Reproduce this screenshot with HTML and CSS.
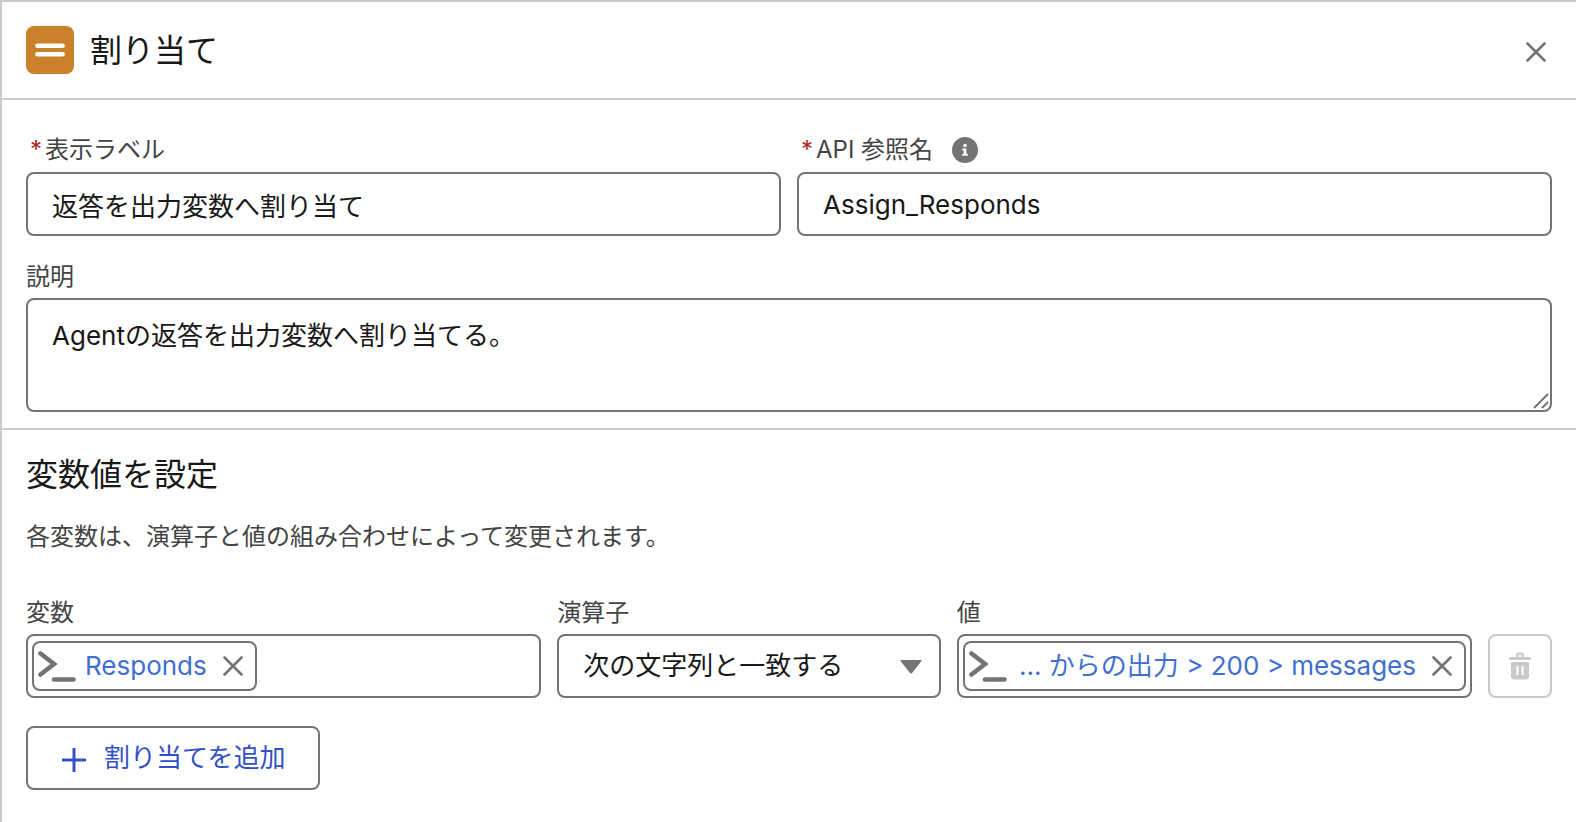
FILE: index.html
```html
<!DOCTYPE html>
<html lang="ja">
<head>
<meta charset="utf-8">
<title>割り当て</title>
<link rel="stylesheet" href="styles.css">
</head>
<body>
<main class="panel">
  <header class="panel-header">
    <span class="element-icon">
      <svg viewBox="0 0 48 48" aria-hidden="true"><path d="M11.400 19.800H36.600M11.400 28.200H36.600"/></svg>
    </span>
    <h1 class="title">割り当て</h1>
    <button class="icon-button close" type="button" aria-label="閉じる">
      <svg class="cross" viewBox="0 0 20 20" aria-hidden="true"><path d="M1.500 1.500l17 17M18.500 1.500l-17 17"/></svg>
    </button>
  </header>

  <section class="details">
    <div class="name-row">
      <div class="field">
        <div class="label-row required">
          <span class="asterisk" aria-hidden="true">*</span>
          <label for="label">表示ラベル</label>
        </div>
        <input class="control" id="label" type="text" value="返答を出力変数へ割り当て" required>
      </div>
      <div class="field">
        <div class="label-row required">
          <span class="asterisk" aria-hidden="true">*</span>
          <label for="api">API 参照名</label>
          <button class="icon-button info" type="button" aria-label="ヘルプ">
            <svg viewBox="0 0 26 26" aria-hidden="true"><circle cx="13" cy="13" r="13" fill="#747474"/><circle cx="13" cy="8.500" r="1.800" fill="#fff"/><path d="M10.300 11.500h4.100v5.300h1.400v1.900h-5.500v-1.900h1.400v-3.400h-1.400z" fill="#fff"/></svg>
          </button>
        </div>
        <input class="control" id="api" type="text" value="Assign_Responds" required>
      </div>
    </div>
    <div class="field">
      <div class="label-row"><label for="description">説明</label></div>
      <div class="textarea-wrap">
        <textarea class="control" id="description" rows="2">Agentの返答を出力変数へ割り当てる。</textarea>
        <svg class="grip" viewBox="0 0 16 16" aria-hidden="true"><path d="M1 15L15 1M9 15l6-6"/></svg>
      </div>
    </div>
  </section>

  <section class="assignments">
    <h2 class="title">変数値を設定</h2>
    <p class="hint">各変数は、演算子と値の組み合わせによって変更されます。</p>
    <div class="assignment-row">
      <div class="field">
        <div class="label-row"><span id="variable-label">変数</span></div>
        <div class="control pill-box" role="group" aria-labelledby="variable-label">
          <span class="pill">
            <svg class="prompt" viewBox="0 0 38 32" aria-hidden="true"><path d="M2.500 3.500L16 14 2.500 24.500"/><path d="M16 29.500h19.500"/></svg>
            <a class="pill-text" href="#">Responds</a>
            <button class="icon-button" type="button" aria-label="Responds を削除"><svg class="cross" viewBox="0 0 20 20" aria-hidden="true"><path d="M1.500 1.500l17 17M18.500 1.500l-17 17"/></svg></button>
          </span>
        </div>
      </div>
      <div class="field">
        <div class="label-row"><label for="operator">演算子</label></div>
        <div class="select-wrap">
          <select class="control" id="operator"><option>次の文字列と一致する</option></select>
          <svg class="caret" viewBox="0 0 22 14" aria-hidden="true"><path d="M1 0h20q1 0 .5 1L12 13q-1 1-2 0L.500 1Q0 0 1 0z"/></svg>
        </div>
      </div>
      <div class="field">
        <div class="label-row"><span id="value-label">値</span></div>
        <div class="control pill-box" role="group" aria-labelledby="value-label">
          <span class="pill wide">
            <svg class="prompt" viewBox="0 0 38 32" aria-hidden="true"><path d="M2.500 3.500L16 14 2.500 24.500"/><path d="M16 29.500h19.500"/></svg>
            <a class="pill-text" href="#">... からの出力 &gt; 200 &gt; messages</a>
            <button class="icon-button" type="button" aria-label="値を削除"><svg class="cross" viewBox="0 0 20 20" aria-hidden="true"><path d="M1.500 1.500l17 17M18.500 1.500l-17 17"/></svg></button>
          </span>
        </div>
      </div>
      <button class="delete" type="button" aria-label="行を削除" disabled>
        <svg viewBox="0 0 22 28" aria-hidden="true"><path d="M1 5h6V3q0-2.500 2.500-2.500h3Q15 .500 15 3v2h6q1 0 1 1v1q0 1-1 1H1Q0 8 0 7V6q0-1 1-1zm8.500 0h3V3h-3z" fill-rule="evenodd"/><path d="M3 10h16q1 0 1 1v13.500q0 3-3 3H5q-3 0-3-3V11q0-1 1-1zm4.500 4v9h2v-9zm5 0v9h2v-9z" fill-rule="evenodd"/></svg>
      </button>
    </div>
    <button class="add" type="button">
      <svg viewBox="0 0 24 24" aria-hidden="true"><path d="M12 0v24M0 12h24"/></svg>
      <span>割り当てを追加</span>
    </button>
  </section>
</main>
</body>
</html>
```
FILE: styles.css
```css
* {
  box-sizing: border-box;
}

body {
  margin: 0;
  background: #fff;
  color: #181818;
  font: 26px/36px Inter, "Noto Sans CJK JP", sans-serif;
}

input,
textarea,
select,
button {
  font: inherit;
  color: inherit;
}

svg {
  display: block;
  flex: none;
}

.panel {
  min-height: 100vh;
  border-top: 2px solid #c9c9c9;
  border-left: 2px solid #c9c9c9;
}

.panel-header {
  display: flex;
  align-items: center;
  gap: 16px;
  padding: 24px;
  border-bottom: 2px solid #c9c9c9;
}

.element-icon {
  width: 48px;
  height: 48px;
  border-radius: 8px;
  background: #ca8129;
}

.element-icon path {
  stroke: #fff;
  stroke-width: 4.500;
  stroke-linecap: round;
}

.title {
  margin: 0;
  padding-top: 2px;
  font-size: 32px;
  line-height: 46px;
  font-weight: 400;
}

.icon-button {
  display: flex;
  padding: 0;
  border: 0;
  background: none;
}

.close {
  margin: 4px 6px 0 auto;
}

.cross {
  width: 20px;
  height: 20px;
  fill: none;
  stroke: #747474;
  stroke-width: 2.600;
  stroke-linecap: round;
}

.details {
  display: grid;
  gap: 22px;
  padding: 32px 24px 16px;
  border-bottom: 2px solid #c9c9c9;
}

.name-row {
  display: grid;
  grid-template-columns: 1fr 1fr;
  gap: 16px;
}

.field {
  min-width: 0;
}

.label-row {
  display: flex;
  align-items: center;
  height: 40px;
  padding-bottom: 2px;
  color: #444;
  font-size: 24px;
}

.required {
  gap: 3px;
  padding-bottom: 4px;
  padding-left: 4px;
}

.asterisk {
  color: #b0281a;
}

.info {
  margin-left: 16px;
}

.info svg {
  width: 26px;
  height: 26px;
}

.control {
  display: block;
  width: 100%;
  height: 64px;
  padding: 0 24px;
  border: 2px solid #747474;
  border-radius: 8px;
  background: #fff;
}

.textarea-wrap,
.select-wrap {
  position: relative;
}

textarea.control {
  height: 114px;
  padding: 18px 24px;
  resize: vertical;
}

textarea::-webkit-resizer {
  display: none;
}

.grip {
  position: absolute;
  right: 3px;
  bottom: 3px;
  width: 16px;
  height: 16px;
  fill: none;
  stroke: #747474;
  stroke-width: 2;
  pointer-events: none;
}

select.control {
  appearance: none;
}

.caret {
  position: absolute;
  top: 26px;
  right: 19px;
  width: 22px;
  height: 14px;
  fill: #747474;
  pointer-events: none;
}

.assignments {
  padding: 20px 24px;
}

.hint {
  margin: 21px 0 39px;
  color: #444;
  font-size: 24px;
}

.assignment-row {
  display: grid;
  grid-template-columns: 47fr 35fr 47fr 64px;
  align-items: end;
  gap: 16px;
  margin-bottom: 28px;
}

.pill-box {
  display: flex;
  align-items: center;
  padding: 0 4px;
}

.pill {
  display: flex;
  align-items: center;
  min-width: 0;
  height: 50px;
  padding: 0 12px 0 4px;
  border: 2px solid #747474;
  border-radius: 8px;
}

.pill.wide {
  flex: 1;
}

.prompt {
  width: 38px;
  height: 32px;
  fill: none;
  stroke: #747474;
  stroke-width: 4.600;
  stroke-linecap: round;
}

.pill-text {
  margin: 0 16px 0 9px;
  color: #3f6fd1;
  text-decoration: none;
  white-space: nowrap;
}

.wide .pill-text {
  flex: 1;
  text-align: right;
}

.delete {
  display: grid;
  place-items: center;
  height: 64px;
  padding: 0;
  border: 2px solid #c9c9c9;
  border-radius: 8px;
  background: #fff;
}

.delete svg {
  width: 22px;
  height: 28px;
  fill: #c9c9c9;
}

.add {
  display: flex;
  align-items: center;
  gap: 18px;
  height: 64px;
  padding: 0 33px 0 34px;
  border: 2px solid #747474;
  border-radius: 8px;
  background: #fff;
  color: #3250c8;
}

.add svg {
  width: 24px;
  height: 24px;
  margin-top: 4px;
  stroke: #3250c8;
  stroke-width: 3;
}
```
